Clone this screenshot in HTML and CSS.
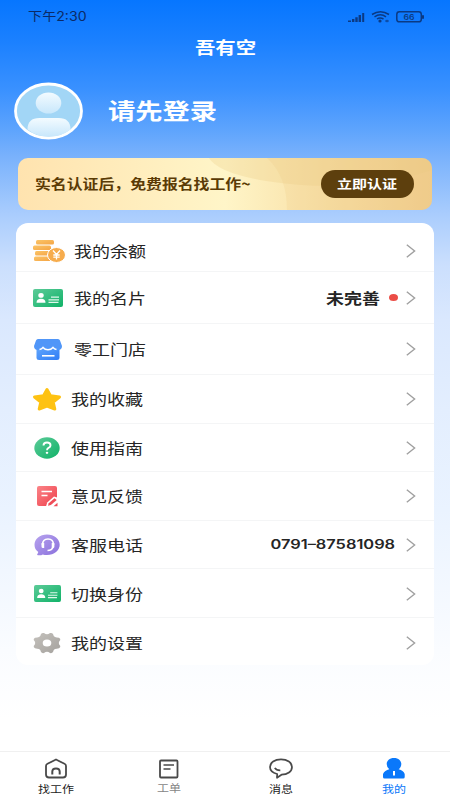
FILE: index.html
```html
<!DOCTYPE html>
<html lang="zh-CN">
<head>
<meta charset="utf-8">
<title>吾有空</title>
<link rel="stylesheet" href="styles.css">
</head>
<body>
<svg class="defs" width="0" height="0">
  <defs>
    <linearGradient id="gold" x1="0" y1="0" x2="1" y2="1"><stop offset="0" stop-color="#fbc568"/><stop offset="1" stop-color="#f5a545"/></linearGradient>
    <linearGradient id="green" x1="0" y1="0" x2="1" y2="1"><stop offset="0" stop-color="#5ccb98"/><stop offset="1" stop-color="#10b268"/></linearGradient>
    <linearGradient id="blue" x1="0" y1="0" x2="1" y2="1"><stop offset="0" stop-color="#60a5fc"/><stop offset="1" stop-color="#2f7df6"/></linearGradient>
    <linearGradient id="red" x1="0" y1="0" x2="1" y2="1"><stop offset="0" stop-color="#fb8488"/><stop offset="1" stop-color="#ee3f4b"/></linearGradient>
    <linearGradient id="purple" x1="0" y1="0" x2="1" y2="1"><stop offset="0" stop-color="#b7a3ee"/><stop offset="1" stop-color="#8a70dc"/></linearGradient>
    <linearGradient id="grey" x1="0" y1="0" x2="1" y2="1"><stop offset="0" stop-color="#c4c1bc"/><stop offset="1" stop-color="#a5a29e"/></linearGradient>
    <linearGradient id="person" x1="0" y1="0" x2="0" y2="1"><stop offset="0" stop-color="#f3fbff"/><stop offset="1" stop-color="#c8e7fb"/></linearGradient>
    <symbol id="idcard" viewBox="0 0 30 18">
      <rect x="0" y="0" width="30" height="18" rx="2" fill="url(#green)"/>
      <ellipse cx="8" cy="6.4" rx="2.7" ry="2.4" fill="#fff"/>
      <path d="M3.5 13.8q0-4 4.5-4t4.500 4z" fill="#fff"/>
      <path d="M18 8.2h8M15.5 10.8h10.5M15.5 13.3h10" stroke="#dff7ea" stroke-width="1.2"/>
    </symbol>
    <symbol id="chevron" viewBox="0 0 10 14"><path d="M.8.8L8.6 7 .8 13.2" fill="none" stroke="#a0a0a0" stroke-width="1.4"/></symbol>
  </defs>
</svg>
<div class="screen">
  <div class="status">
    <span class="clock">下午2:30</span>
    <svg class="signals" width="78" height="14" viewBox="0 0 78 14">
      <g fill="#0b3a84">
        <path d="M0 10.500h3v1.500H0zM4 9h2.400v3H4zM7.300 7.200h2.400V12H7.300zM10.600 5h2.400v7h-2.400zM14.200 3h2v9h-2z"/>
        <circle cx="32" cy="11" r="1.600"/><ellipse cx="39" cy="11" rx="1.800" ry="1.300" opacity=".7"/>
        <rect x="74" y="5" width="2" height="4" rx="1"/>
      </g>
      <g fill="none" stroke="#0b3a84" stroke-width="1.500">
        <path d="M24 4.500q8.500-5.500 17 0M26.500 6.800q6-4 11.500 0M29 9q3-2 6.500 0"/>
        <rect x="48.800" y="1.800" width="24.500" height="10" rx="2.600"/>
      </g>
      <text x="55.500" y="9.800" textLength="11" lengthAdjust="spacingAndGlyphs" class="battery">66</text>
    </svg>
  </div>
  <h1 class="title"><span class="wide">吾有空</span></h1>
  <div class="profile">
    <svg width="70" height="58" viewBox="0 0 70 58">
      <ellipse cx="34.500" cy="29" rx="33" ry="27" fill="#a2d6f6" stroke="#fff" stroke-width="2.800"/>
      <ellipse cx="34.500" cy="21" rx="12.800" ry="10.500" fill="url(#person)"/>
      <path d="M13.500 47.500q0-11.500 12-11.500h19q12 0 12 11.500-9 7.200-21.500 7.200t-21.500-7.200z" fill="url(#person)"/>
    </svg>
    <span class="login wide">请先登录</span>
  </div>
  <div class="banner">
    <svg class="swirl" width="414" height="52" viewBox="0 0 414 52">
      <path d="M191 0q9 15 57 23 90 14 166-11V0z" fill="#e8c982" opacity=".28"/>
      <path d="M249 0q20 18 20 52h145V0z" fill="#edc782" opacity=".22"/>
    </svg>
    <span class="notice wide">实名认证后，免费报名找工作~</span>
    <button class="verify"><span class="wide">立即认证</span></button>
  </div>
  <ul class="card">
    <li class="row first"><i class="icon"><svg width="34" height="24" viewBox="0 0 34 24">
      <g fill="url(#gold)"><rect x="4" y="1" width="18" height="4.500" rx="1.500"/><rect x="1" y="6.500" width="18" height="4.500" rx="1.500"/><rect x="3" y="12" width="15" height="4.500" rx="1.500"/><rect x="2" y="17.500" width="17" height="4.500" rx="1.500"/></g>
      <ellipse cx="24.500" cy="16" rx="9" ry="7.500" fill="#f6ac4d" stroke="#fff"/>
      <path d="M21 11.500l3.500 4 3.500-4M24.500 15.500V20.500M21.300 16h6.400M21.300 18.200h6.400" fill="none" stroke="#fff" stroke-width="1.300"/></svg></i>
      <span class="label wide">我的余额</span><svg class="chev"><use href="#chevron"/></svg></li>
    <li class="row second"><i class="icon"><svg width="30" height="18"><use href="#idcard"/></svg></i>
      <span class="label wide">我的名片</span><span class="value wide">未完善</span><b class="dot"></b><svg class="chev"><use href="#chevron"/></svg></li>
    <li class="row third"><i class="icon"><svg width="30" height="23" viewBox="0 0 30 23">
      <path d="M3.500 10h23v10q0 2-2.500 2H6q-2.500 0-2.500-2z" fill="url(#blue)"/>
      <path d="M5 1h20q1.500 0 2 1.500L29 8q0 4-4 4-3 0-5-2.500Q18 12 15 12T10 9.500Q8 12 5 12 1 12 1 8L3 2.500Q3.500 1 5 1z" fill="#5096f8"/>
      <path d="M6.500 11.500q2-.3 3.500-2 2 2.300 5 2.300t5-2.300q1.500 1.700 3.500 2" fill="none" stroke="#fff" stroke-width="1.500"/>
      <path d="M9 17.800h12.500" stroke="#fff" stroke-width="1.600"/></svg></i>
      <span class="label wide">零工门店</span><svg class="chev"><use href="#chevron"/></svg></li>
    <li class="row near"><i class="icon"><svg width="30" height="24" viewBox="0 0 30 24">
      <path d="M15 2.500l3.500 6.200 9 1.300-6.300 5 1.600 7L15 19.200 7.200 22l1.600-7-6.300-5 9-1.300z" fill="#fec212" stroke="#fec212" stroke-width="3" stroke-linejoin="round"/></svg></i>
      <span class="label wide">我的收藏</span><svg class="chev"><use href="#chevron"/></svg></li>
    <li class="row near"><i class="icon"><svg width="26" height="22" viewBox="0 0 26 22">
      <ellipse cx="13" cy="11" rx="12.700" ry="10.700" fill="url(#green)"/>
      <path d="M9.500 8.500q0-3 3.500-3t3.500 2.700q0 1.600-1.700 2.500-1.800.9-1.800 2.500" fill="none" stroke="#fff" stroke-width="1.900"/><ellipse cx="13" cy="15.800" rx="1.300" ry="1.100" fill="#fff"/></svg></i>
      <span class="label wide">使用指南</span><svg class="chev"><use href="#chevron"/></svg></li>
    <li class="row near"><i class="icon"><svg width="22" height="22" viewBox="0 0 22 22">
      <rect x="1" y="1" width="20" height="20" rx="2" fill="url(#red)"/>
      <path d="M5.500 6.500h10.500M5.500 10.500h6" stroke="#fff" stroke-width="1.500"/>
      <path d="M10 21.500l1.200-4L18 11.500l5 1.500v9z" fill="#fff"/>
      <path d="M12 20.800l.7-2.600 5.800-5 2.200 1.800-5.800 5z" fill="#ef4c57"/><path d="M17.500 21.200l4-3.500v3.500z" fill="#ef4c57"/></svg></i>
      <span class="label wide">意见反馈</span><svg class="chev"><use href="#chevron"/></svg></li>
    <li class="row near"><i class="icon"><svg width="26" height="22" viewBox="0 0 26 22">
      <path d="M13 .500c7.200 0 12.700 4.500 12.700 10.300S20.200 21 13 21q-2.300 0-4.300-.6-2 1.400-5.700.6l1.300-2.900Q.5 15.400.5 10.800C.5 5 5.800.5 13 .5z" fill="url(#purple)"/>
      <path d="M8.500 11Q8.500 5 14 5t5.500 6" fill="none" stroke="#fff" stroke-width="1.600"/>
      <path d="M7.500 9h2.700v5H9q-1.500 0-1.500-1.500zM17.700 9h2.700v3.500q0 1.500-1.400 1.500h-1.300z" fill="#fff"/>
      <path d="M19 13q-1 3.500-5.500 3.500" fill="none" stroke="#fff" stroke-width="1.600"/></svg></i>
      <span class="label wide">客服电话</span><span class="value phone">0791–87581098</span><svg class="chev"><use href="#chevron"/></svg></li>
    <li class="row near"><i class="icon"><svg width="27" height="17" viewBox="0 0 30 18" preserveAspectRatio="none"><use href="#idcard" width="30" height="18"/></svg></i>
      <span class="label wide">切换身份</span><svg class="chev"><use href="#chevron"/></svg></li>
    <li class="row near"><i class="icon"><svg width="28" height="22" viewBox="0 0 28 22">
      <path d="M8 2Q9 .5 11 1q1.500 1.300 3 1.300T17 1q2-.5 3 1 .5 2.500 2 3 1.500.4 4 .8 1.500.7 1.300 2.200-1.500 1.500-1.500 3t1.500 3q.2 1.500-1.300 2.200-2.500.4-4 .8-1.500.5-2 3-1 1.500-3 1-1.500-1.300-3-1.300T11 21q-2 .5-3-1-.5-2.500-2-3-1.500-.4-4-.8Q.5 15.500.7 14q1.500-1.500 1.500-3T.7 8Q.5 6.500 2 5.800 4.500 5.400 6 5 7.500 4.500 8 2z" fill="url(#grey)"/>
      <ellipse cx="14" cy="11" rx="4.300" ry="3.600" fill="#fff"/></svg></i>
      <span class="label wide">我的设置</span><svg class="chev"><use href="#chevron"/></svg></li>
  </ul>
  <nav class="tabs">
    <a class="tab"><svg width="24" height="22" viewBox="0 0 24 22"><g fill="none" stroke="#494949" stroke-width="1.800" stroke-linejoin="round"><path d="M12 1.500l8.500 4.300q1.500.8 1.500 2.200v8.500q0 3-3 3H5q-3 0-3-3V8q0-1.400 1.500-2.200z"/><path d="M8.300 16.500v-2.700q0-3.300 3.700-3.300t3.700 3.300v2.700" stroke-width="2"/></g></svg><span class="wide">找工作</span></a>
    <a class="tab muted"><svg width="24" height="22" viewBox="0 0 24 22"><g fill="none" stroke="#494949" stroke-width="1.800"><rect x="3" y="2.500" width="17.500" height="17" rx="1"/><path d="M6.500 7h10.500M6.500 11h7" stroke-width="1.400"/></g></svg><span class="wide">工单</span></a>
    <a class="tab"><svg width="26" height="22" viewBox="0 0 26 22"><g fill="none" stroke="#494949" stroke-width="1.700" stroke-linejoin="round"><path d="M13 1.300c6.300 0 11 3.200 11 7.700s-4.500 7.600-10.500 7.700L9 19.800l.2-3.800C4.500 14.800 2 12.500 2 9c0-4.500 4.700-7.700 11-7.700z"/><path d="M6.800 9.800q1.500 2.700 5.500 2.600"/></g></svg><span class="wide">消息</span></a>
    <a class="tab active"><svg width="24" height="22" viewBox="0 0 24 22"><path d="M12 0c4.500 0 7.300 2.700 7.300 6 0 2.300-1 4-2.600 5.200q4.600 1 6 4.800V19q0 1.500-1.500 1.500H2.500Q1 20.500 1 19v-3q1.700-3.800 6.300-4.800Q4.700 9.300 4.700 6C4.700 2.700 7.500 0 12 0z" fill="#0a78fa"/><path d="M12 13v4.500" stroke="#fff" stroke-width="2"/></svg><span class="wide">我的</span></a>
  </nav>
</div>
</body>
</html>
```
FILE: styles.css
```css
* { box-sizing: border-box; }
body { margin: 0; font-family: "Noto Sans CJK SC", sans-serif; }
.defs { position: absolute; }
svg { display: block; flex: none; }
.wide { display: inline-block; transform: scaleX(1.2); white-space: nowrap; }
.screen {
  width: 450px; height: 800px; display: flex; flex-direction: column; overflow: hidden;
  background: linear-gradient(180deg, #0676ff 0, #1a80ff 40px, #3a91ff 90px, #5ea4fd 130px, #78b1fc 155px, #aacdfd 215px, #cbdffd 265px, #dae8fe 320px, #e3eefe 410px, #eaf3ff 510px, #fafcff 650px, #fff 720px);
}
.status { height: 32px; display: flex; align-items: center; padding: 1px 24px 0 28px; }
.clock { flex: 1; font: 400 12.500px/20px Inter, "Noto Sans CJK SC", sans-serif; color: #0b2a66; transform: scaleX(1.130); transform-origin: left; }
.battery { font: 600 8px Inter, sans-serif; fill: #0b3a84; }
.title { margin: 0; height: 32px; text-align: center; color: #fff; font-size: 17px; line-height: 30px; font-weight: 700; }
.profile { height: 94px; display: flex; align-items: center; padding: 0 0 1px 14px; }
.login { margin: 0 0 3px 24px; transform: scaleX(1.240); transform-origin: left; color: #fff; font-size: 22px; line-height: 30px; font-weight: 700; }
.banner { position: relative; width: 414px; height: 52px; margin: 0 18px 13px; border-radius: 10px; overflow: hidden; display: flex; align-items: center; justify-content: space-between; padding: 0 18px 0 17px; background: linear-gradient(90deg, #ffe3af 0, #fff5c8 50%, #f8dfa5 75%, #f0cc8c 100%); }
.swirl { position: absolute; left: 0; top: 0; }
.notice { position: relative; margin-bottom: 2px; transform: scaleX(1.175); transform-origin: left; color: #5b3b05; font-size: 13.500px; font-weight: 700; }
.verify { position: relative; width: 93px; height: 28px; padding: 0; border: 0; border-radius: 14px; background: #5d3f0d; color: #fff; font: 700 12.500px/28px "Noto Sans CJK SC", sans-serif; }
.card { width: 418px; height: 442px; margin: 0 16px; padding: 0; list-style: none; background: #fff; border-radius: 12px; }
.row { height: 48.600px; display: flex; align-items: center; padding: 1px 18px 0 0; border-bottom: 1px solid #f4f5f6; }
.row:last-child { border-bottom: 0; }
.first { height: 49px; padding-top: 7px; }
.second { height: 51.500px; }
.third { height: 51.500px; }
.icon { width: 58px; display: flex; justify-content: center; flex: none; padding-left: 6px; }
.near .icon { width: 55px; }
.label { transform-origin: left; color: #252525; font-size: 15px; line-height: 24px; margin-right: auto; }
.first .icon { padding-left: 8px; }
.near .icon { padding-left: 7px; }
.value { transform-origin: right; color: #252525; font-size: 15px; line-height: 24px; font-weight: 700; }
.phone { font: 600 12.500px/20px Inter, sans-serif; transform: scaleX(1.310); margin-right: 11px; }
.dot { width: 9px; height: 7px; border-radius: 50%; background: #eb4d46; margin: 0 8px 0 9px; }
.chev { width: 10px; height: 14px; }
.tabs { height: 49px; margin-top: auto; border-top: 1px solid #f0f0f0; background: #fff; display: flex; }
.tab { flex: 1; display: flex; flex-direction: column; align-items: center; padding-top: 6px; color: #222; font-size: 10px; line-height: 17px; }
.muted { color: #858585; }
.muted .wide { margin-top: -1px; }
.active { color: #0a78fa; }
```
